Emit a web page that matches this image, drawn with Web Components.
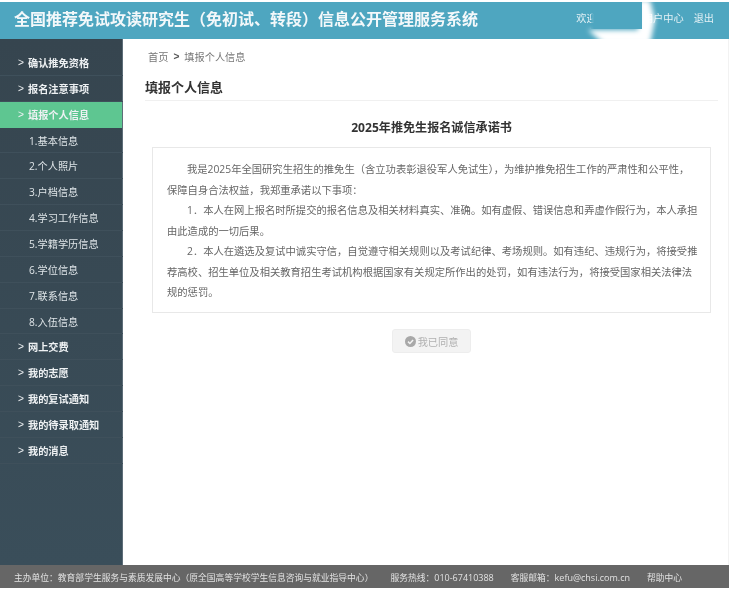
<!DOCTYPE html>
<html lang="zh-CN">
<head>
<meta charset="utf-8">
<title>填报个人信息</title>
<style>
    html, body { margin: 0; height: 100%; background: #fff; }
    body {
        font-family: "Open Sans", "Noto Sans CJK SC", sans-serif;
        overflow: hidden;
    }
    #app {
        display: grid;
        grid-template-rows: 37px 526px 23px;
        grid-template-columns: 123px 1fr;
        height: 588px;
        padding-top: 2px;
        box-sizing: border-box;
        filter: blur(0.45px);
    }
</style>
</head>
<body>
<div id="app">
    <app-header></app-header>
    <side-nav>
        <nav-item kind="main">确认推免资格</nav-item>
        <nav-item kind="main">报名注意事项</nav-item>
        <nav-item kind="main" active>填报个人信息</nav-item>
        <nav-item>1.基本信息</nav-item>
        <nav-item>2.个人照片</nav-item>
        <nav-item>3.户档信息</nav-item>
        <nav-item>4.学习工作信息</nav-item>
        <nav-item>5.学籍学历信息</nav-item>
        <nav-item>6.学位信息</nav-item>
        <nav-item>7.联系信息</nav-item>
        <nav-item>8.入伍信息</nav-item>
        <nav-item kind="main">网上交费</nav-item>
        <nav-item kind="main">我的志愿</nav-item>
        <nav-item kind="main">我的复试通知</nav-item>
        <nav-item kind="main">我的待录取通知</nav-item>
        <nav-item kind="main">我的消息</nav-item>
    </side-nav>
    <main-panel>
        <promise-letter title="2025年推免生报名诚信承诺书">
            <p>我是2025年全国研究生招生的推免生（含立功表彰退役军人免试生），为维护推免招生工作的严肃性和公平性，<br>保障自身合法权益，我郑重承诺以下事项：</p>
            <p>1．本人在网上报名时所提交的报名信息及相关材料真实、准确。如有虚假、错误信息和弄虚作假行为，本人承担<br>由此造成的一切后果。</p>
            <p>2．本人在遴选及复试中诚实守信，自觉遵守相关规则以及考试纪律、考场规则。如有违纪、违规行为，将接受推<br>荐高校、招生单位及相关教育招生考试机构根据国家有关规定所作出的处罚，如有违法行为，将接受国家相关法律法<br>规的惩罚。</p>
        </promise-letter>
    </main-panel>
    <page-footer></page-footer>
</div>

<script>
class AppHeader extends HTMLElement {
    constructor() {
        super();
        this.attachShadow({mode: 'open'});
        this.shadowRoot.innerHTML = `
            <style>
                :host {
                    grid-column: 1 / -1;
                    display: flex;
                    align-items: center;
                    justify-content: space-between;
                    position: relative;
                    overflow: hidden;
                    padding: 0 15px 6px 14px;
                    background: #4ea6c0;
                    color: #fff;
                }
                h1 { margin: 0; font-size: 16px; font-weight: 700; color: #f3f8fa; }
                nav { display: flex; gap: 10px; font-size: 10.2px; color: #e4f1f5; }
                .welcome { margin-right: 26px; }
                /* the smudge over the user name in the original shot */
                .glow {
                    position: absolute;
                    left: 580px;
                    top: -2px;
                    width: 80px;
                    height: 44px;
                    filter: blur(2.5px);
                }
                .glow div {
                    width: 100%;
                    height: 100%;
                    background: #fff;
                    clip-path: polygon(58px 0, 70px 0, 75px 20px, 70px 44px, 24px 44px, 8px 30px, 58px 30px);
                }
                .patch {
                    position: absolute;
                    left: 591px;
                    top: 0;
                    width: 51px;
                    height: 27px;
                    background: linear-gradient(90deg, rgba(78,166,192,0.4), #4ea6c0 3px);
                }
            </style>
            <h1>全国推荐免试攻读研究生（免初试、转段）信息公开管理服务系统</h1>
            <nav><span class="welcome">欢迎您</span><span>用户中心</span><span>退出</span></nav>
            <div class="glow"><div></div></div>
            <div class="patch"></div>
        `;
    }
}

class SideNav extends HTMLElement {
    constructor() {
        super();
        this.attachShadow({mode: 'open'});
        this.shadowRoot.innerHTML = `
            <style>
                :host {
                    display: block;
                    padding-top: 11px;
                    background: linear-gradient(#36454f, #3a4e5a);
                    box-shadow: inset -1px 0 0 #5d6d78;
                }
            </style>
            <slot></slot>
        `;
    }
}

class NavItem extends HTMLElement {
    constructor() {
        super();
        this.attachShadow({mode: 'open'});
        this.shadowRoot.innerHTML = `
            <style>
                :host {
                    display: flex;
                    align-items: center;
                    height: 25.87px;
                    box-sizing: border-box;
                    padding-left: 29px;
                    font-size: 10.2px;
                    color: #dfe5e8;
                    border-bottom: 1px solid #3f505b;
                }
                :host([kind="main"]) {
                    padding-left: 18px;
                    font-weight: 700;
                    color: #eef1f3;
                }
                :host([active]) {
                    background: #5ec691;
                    border-bottom-color: #5ec691;
                    margin-right: 1px;
                }
                .arrow { display: none; width: 10px; font-weight: 400; font-family: "Liberation Sans", sans-serif; }
                :host([kind="main"]) .arrow { display: inline; }
            </style>
            <span class="arrow">&gt;</span><slot></slot>
        `;
    }
}

class MainPanel extends HTMLElement {
    constructor() {
        super();
        this.attachShadow({mode: 'open'});
        this.shadowRoot.innerHTML = `
            <style>
                :host {
                    display: block;
                    padding: 0 11px 0 22px;
                    color: #333;
                    box-shadow: inset -1px 0 0 #f2f2f2;
                }
                .crumb {
                    display: flex;
                    align-items: center;
                    height: 34px;
                    margin-bottom: 2px;
                    padding-left: 3px;
                    font-size: 10.2px;
                    color: #777;
                }
                .crumb b { color: #555; margin: 0 5px; font-family: "Liberation Sans", sans-serif; }
                h2 {
                    margin: 0;
                    height: 25px;
                    line-height: 25px;
                    font-size: 13px;
                    font-weight: 700;
                    color: #333;
                    border-bottom: 1px solid #f0f0f0;
                }
            </style>
            <div class="crumb"><span>首页</span><b>&gt;</b><span>填报个人信息</span></div>
            <h2>填报个人信息</h2>
            <slot></slot>
        `;
    }
}

class PromiseLetter extends HTMLElement {
    constructor() {
        super();
        this.attachShadow({mode: 'open'});
        this.shadowRoot.innerHTML = `
            <style>
                :host { display: block; }
                h3 {
                    margin: 0;
                    padding-top: 18px;
                    height: 28px;
                    line-height: 17px;
                    text-align: center;
                    font-size: 12.1px;
                    font-weight: 700;
                    color: #333;
                }
                .box {
                    box-sizing: border-box;
                    width: 559px;
                    height: 166px;
                    margin-left: 7px;
                    padding: 11px 0 0 14px;
                    border: 1px solid #e8e8e8;
                    font-size: 10.3px;
                    line-height: 20.5px;
                    color: #666;
                    white-space: nowrap;
                }
                ::slotted(p) { margin: 0; text-indent: 20px; }
                .actions { display: flex; justify-content: center; padding-top: 16px; }
            </style>
            <h3></h3>
            <div class="box"><slot></slot></div>
            <div class="actions"><agree-button>我已同意</agree-button></div>
        `;
        this.shadowRoot.querySelector('h3').textContent = this.getAttribute('title');
    }
}

class AgreeButton extends HTMLElement {
    constructor() {
        super();
        this.attachShadow({mode: 'open'});
        this.shadowRoot.innerHTML = `
            <style>
                :host {
                    display: inline-flex;
                    align-items: center;
                    justify-content: center;
                    gap: 2px;
                    width: 79px;
                    height: 24px;
                    box-sizing: border-box;
                    border: 1px solid #ededed;
                    border-radius: 3px;
                    background: #f3f3f3;
                    font-size: 10.2px;
                    color: #b0b0b0;
                }
                svg { display: block; }
            </style>
            <svg width="11" height="11" viewBox="0 0 11 11">
                <circle cx="5.5" cy="5.5" r="5.5" fill="#a8a8a8"/>
                <path d="M3 5.6 L4.9 7.5 L8.1 3.9" fill="none" stroke="#f3f3f3" stroke-width="1.5"/>
            </svg>
            <slot></slot>
        `;
    }
}

class PageFooter extends HTMLElement {
    constructor() {
        super();
        this.attachShadow({mode: 'open'});
        this.shadowRoot.innerHTML = `
            <style>
                :host {
                    grid-column: 1 / -1;
                    display: flex;
                    align-items: center;
                    gap: 17px;
                    padding: 1px 0 0 14px;
                    background: #666;
                    font-size: 8.77px;
                    color: #e2e2e2;
                    white-space: nowrap;
                }
                .num { font-size: 9px; }
            </style>
            <span>主办单位：教育部学生服务与素质发展中心（原全国高等学校学生信息咨询与就业指导中心）</span>
            <span>服务热线：<span class="num">010-67410388</span></span>
            <span>客服邮箱：<span class="num">kefu@chsi.com.cn</span></span>
            <span>帮助中心</span>
        `;
    }
}

customElements.define('app-header', AppHeader);
customElements.define('side-nav', SideNav);
customElements.define('nav-item', NavItem);
customElements.define('main-panel', MainPanel);
customElements.define('promise-letter', PromiseLetter);
customElements.define('agree-button', AgreeButton);
customElements.define('page-footer', PageFooter);
</script>
</body>
</html>
